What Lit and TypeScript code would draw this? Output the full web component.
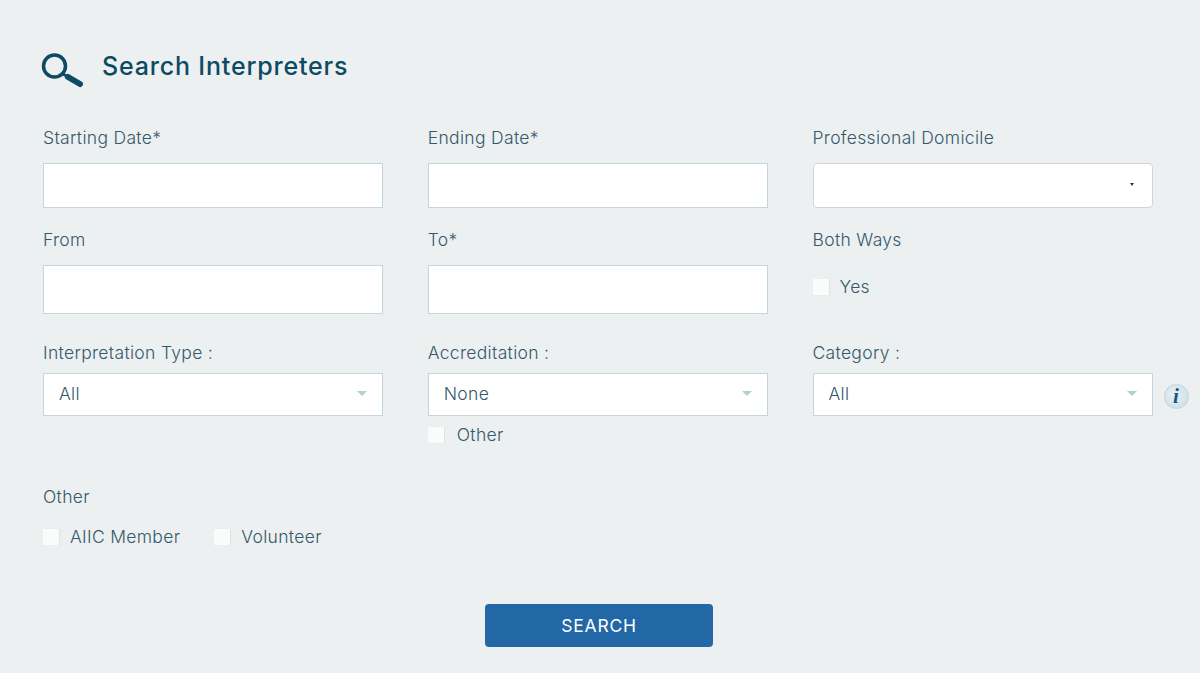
import { LitElement, html, css } from 'lit'
import { customElement } from 'lit/decorators.js'

@customElement('app-root')
export class AppRoot extends LitElement {
  static styles = css`
    :host {
      display: block;
      height: 673px;
      overflow: hidden;
      background: #ecf0f1;
      color: #35586b;
      font-family: Inter, 'Open Sans', sans-serif;
      font-size: 17.5px;
      font-weight: 300;
      line-height: 20px;
      letter-spacing: 0.32px;
    }

    .page {
      padding: 0 45px 0 43px;
    }

    .header {
      display: flex;
      align-items: center;
      gap: 17px;
      height: 130px;
      margin-left: -2px;
    }

    .header svg {
      display: block;
      margin-top: 12px;
    }

    h1 {
      margin: 0;
      padding-top: 2px;
      color: #0d4a63;
      font-size: 25px;
      font-weight: 500;
      line-height: 30px;
      letter-spacing: 0.82px;
    }

    .row {
      display: grid;
      grid-template-columns: repeat(3, 340px);
      column-gap: 44.75px;
    }

    .row-1 { margin-top: -3px; }
    .row-2 { margin-top: 21px; }
    .row-3 { margin-top: 28px; }
    .row-4 { margin-top: 39px; }

    label, .label {
      display: block;
      height: 20px;
      line-height: 22px;
    }

    .gap-16 { margin-bottom: 16px; }
    .gap-21 { margin-bottom: 21px; }
    .gap-11 { margin-bottom: 11px; }

    input.text {
      display: block;
      box-sizing: border-box;
      width: 100%;
      margin: 0;
      border: 1px solid #c2d6db;
      background: #fff;
    }

    .h45 { height: 45px; }
    .h49 { height: 49px; }

    .select {
      box-sizing: border-box;
      flex: none;
      display: flex;
      align-items: center;
      justify-content: space-between;
      width: 340px;
      height: 43px;
      padding: 0 15px 2px;
      border: 1px solid #c2d6db;
      background: #fff;
    }

    .select.plain {
      height: 45px;
      border-color: #d0d5d6;
      border-radius: 4px;
      padding-right: 18px;
    }

    .caret {
      width: 0;
      height: 0;
      border-left: 5.5px solid transparent;
      border-right: 5.5px solid transparent;
      border-top: 5px solid #b5cdd4;
    }

    .plain .caret {
      border-left-width: 2.5px;
      border-right-width: 2.5px;
      border-top: 3px solid #333;
    }

    .with-info {
      display: flex;
      align-items: center;
      gap: 11px;
    }

    .info {
      flex: none;
      box-sizing: border-box;
      width: 25px;
      height: 25px;
      margin-top: 3px;
      border: 1px solid #bcd6e0;
      border-radius: 50%;
      background: radial-gradient(circle at 40% 40%, #e6f0f4, #c6dde7);
      color: #17567a;
      font-family: 'Liberation Serif', serif;
      font-size: 21px;
      font-style: italic;
      font-weight: 700;
      line-height: 23px;
      text-align: center;
    }

    .check {
      display: inline-flex;
      align-items: center;
      gap: 11px;
    }

    .check i {
      flex: none;
      width: 16px;
      height: 16px;
      background: #fafbfb;
      box-shadow: 1px 0 1px #dfe5e7;
    }

    .yes { margin-top: 28px; }

    .sub {
      gap: 13px;
      margin-top: 9px;
    }

    .checks {
      display: flex;
      gap: 34px;
    }

    .actions {
      display: flex;
      justify-content: center;
      margin-top: 57px;
    }

    button {
      width: 228px;
      height: 43px;
      border: none;
      border-radius: 4px;
      background: #2268a6;
      color: #fff;
      font: inherit;
      font-weight: 400;
      letter-spacing: 0.8px;
    }
  `

  private check(text: string, extra = '') {
    return html`<span class="check ${extra}"><i></i>${text}</span>`
  }

  private select(text: string, extra = '') {
    return html`<div class="select ${extra}"><span>${text}</span><span class="caret"></span></div>`
  }

  render() {
    return html`
      <div class="page">
        <div class="header">
          <svg width="44" height="36" viewBox="0 0 44 36" fill="none" stroke="#0d4a63">
            <circle cx="13.5" cy="13" r="11" stroke-width="3.5" />
            <path d="M22 21l6 3.5" stroke-width="3" />
            <path d="M27 24l12 7" stroke-width="6" stroke-linecap="round" />
          </svg>
          <h1>Search Interpreters</h1>
        </div>

        <div class="row row-1">
          <div><label class="gap-16">Starting Date*</label><input class="text h45" /></div>
          <div><label class="gap-16">Ending Date*</label><input class="text h45" /></div>
          <div><label class="gap-16">Professional Domicile</label>${this.select('', 'plain')}</div>
        </div>

        <div class="row row-2">
          <div><label class="gap-16">From</label><input class="text h49" /></div>
          <div><label class="gap-16">To*</label><input class="text h49" /></div>
          <div>
            <span class="label">Both Ways</span>
            <div class="yes">${this.check('Yes')}</div>
          </div>
        </div>

        <div class="row row-3">
          <div><label class="gap-11">Interpretation Type :</label>${this.select('All')}</div>
          <div>
            <label class="gap-11">Accreditation :</label>
            ${this.select('None')}
            ${this.check('Other', 'sub')}
          </div>
          <div>
            <label class="gap-11">Category :</label>
            <div class="with-info">${this.select('All')}<span class="info">i</span></div>
          </div>
        </div>

        <div class="row-4">
          <span class="label gap-21">Other</span>
          <div class="checks">${this.check('AIIC Member')}${this.check('Volunteer')}</div>
        </div>

        <div class="actions"><button>SEARCH</button></div>
      </div>
    `
  }
}
